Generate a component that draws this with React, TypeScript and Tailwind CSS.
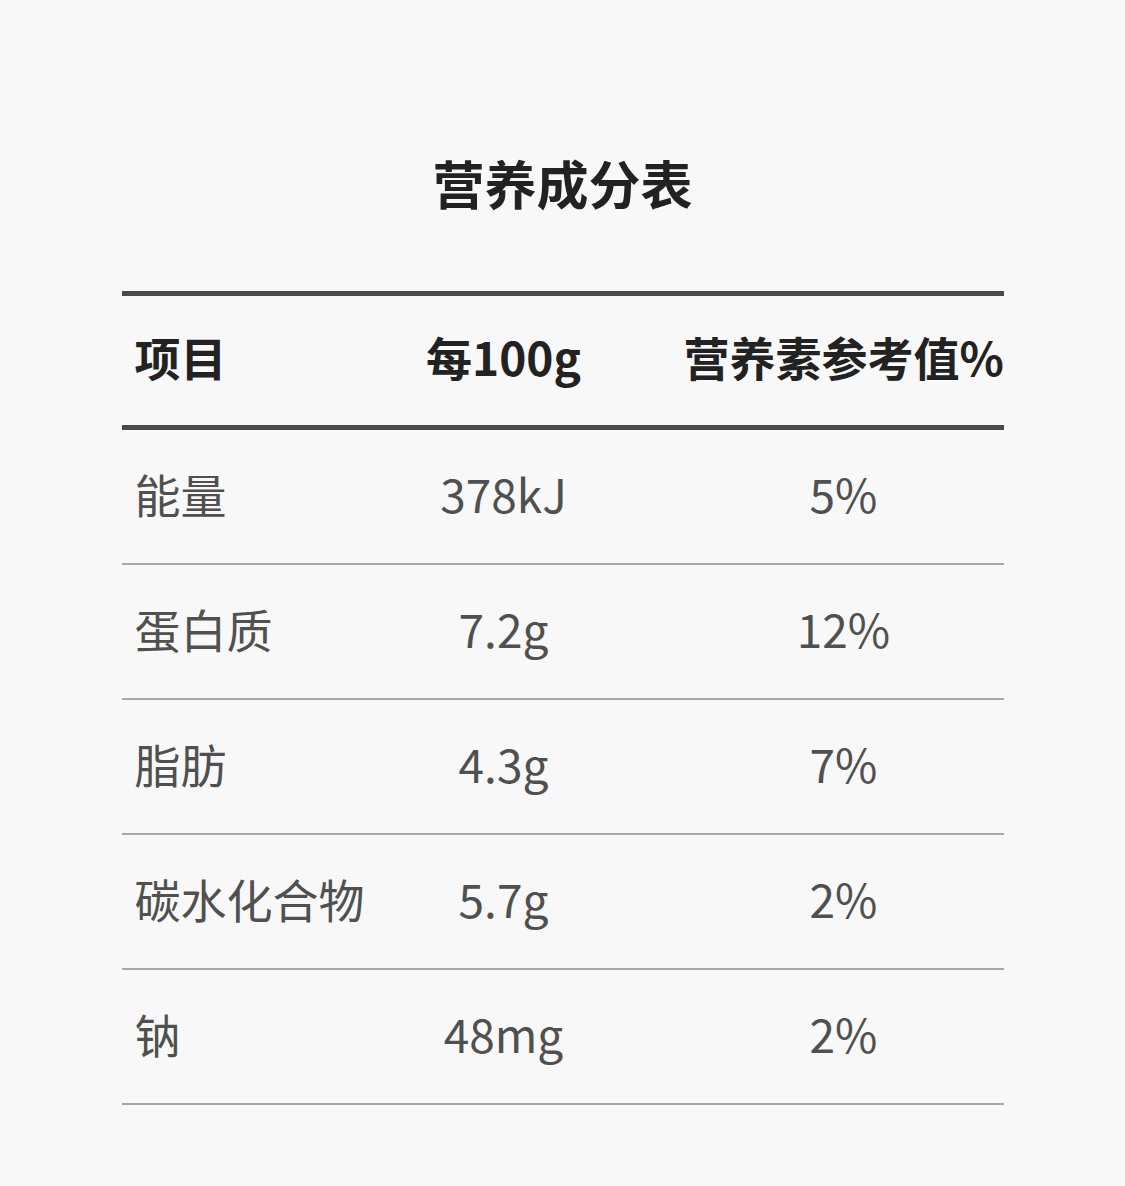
import React from "react";

const rows = [
  { name: "能量", per100: "378kJ", nrv: "5%" },
  { name: "蛋白质", per100: "7.2g", nrv: "12%" },
  { name: "脂肪", per100: "4.3g", nrv: "7%" },
  { name: "碳水化合物", per100: "5.7g", nrv: "2%" },
  { name: "钠", per100: "48mg", nrv: "2%" },
];

export default function App() {
  return (
    <div
      className="min-h-screen bg-[#f8f8f8] pt-[157px]"
      style={{ fontFamily: '"Noto Sans CJK SC", "Noto Sans", sans-serif' }}
    >
      <h1 className="h-[52px] text-center text-[52px] leading-[52px] font-bold text-[#222]">
        营养成分表
      </h1>

      <div className="mx-auto mt-[82px] w-[882px]">
        {/* Header */}
        <div className="flex h-[139px] items-center whitespace-nowrap border-y-[5px] border-[#4a4a4a] pb-[8px] text-[46px] font-bold text-[#222]">
          <div className="w-[202px] pl-[13px]">项目</div>
          <div className="w-[360px] text-center">每100g</div>
          <div className="w-[320px] text-center">营养素参考值%</div>
        </div>

        {/* Rows */}
        {rows.map((row) => (
          <div
            key={row.name}
            className="flex h-[135px] items-center whitespace-nowrap border-b-2 border-[#a8a8a8] pb-[6px] text-[46px] text-[#505050]"
          >
            <div className="w-[202px] pl-[13px]">{row.name}</div>
            <div className="w-[360px] text-center">{row.per100}</div>
            <div className="w-[320px] text-center">{row.nrv}</div>
          </div>
        ))}
      </div>
    </div>
  );
}
